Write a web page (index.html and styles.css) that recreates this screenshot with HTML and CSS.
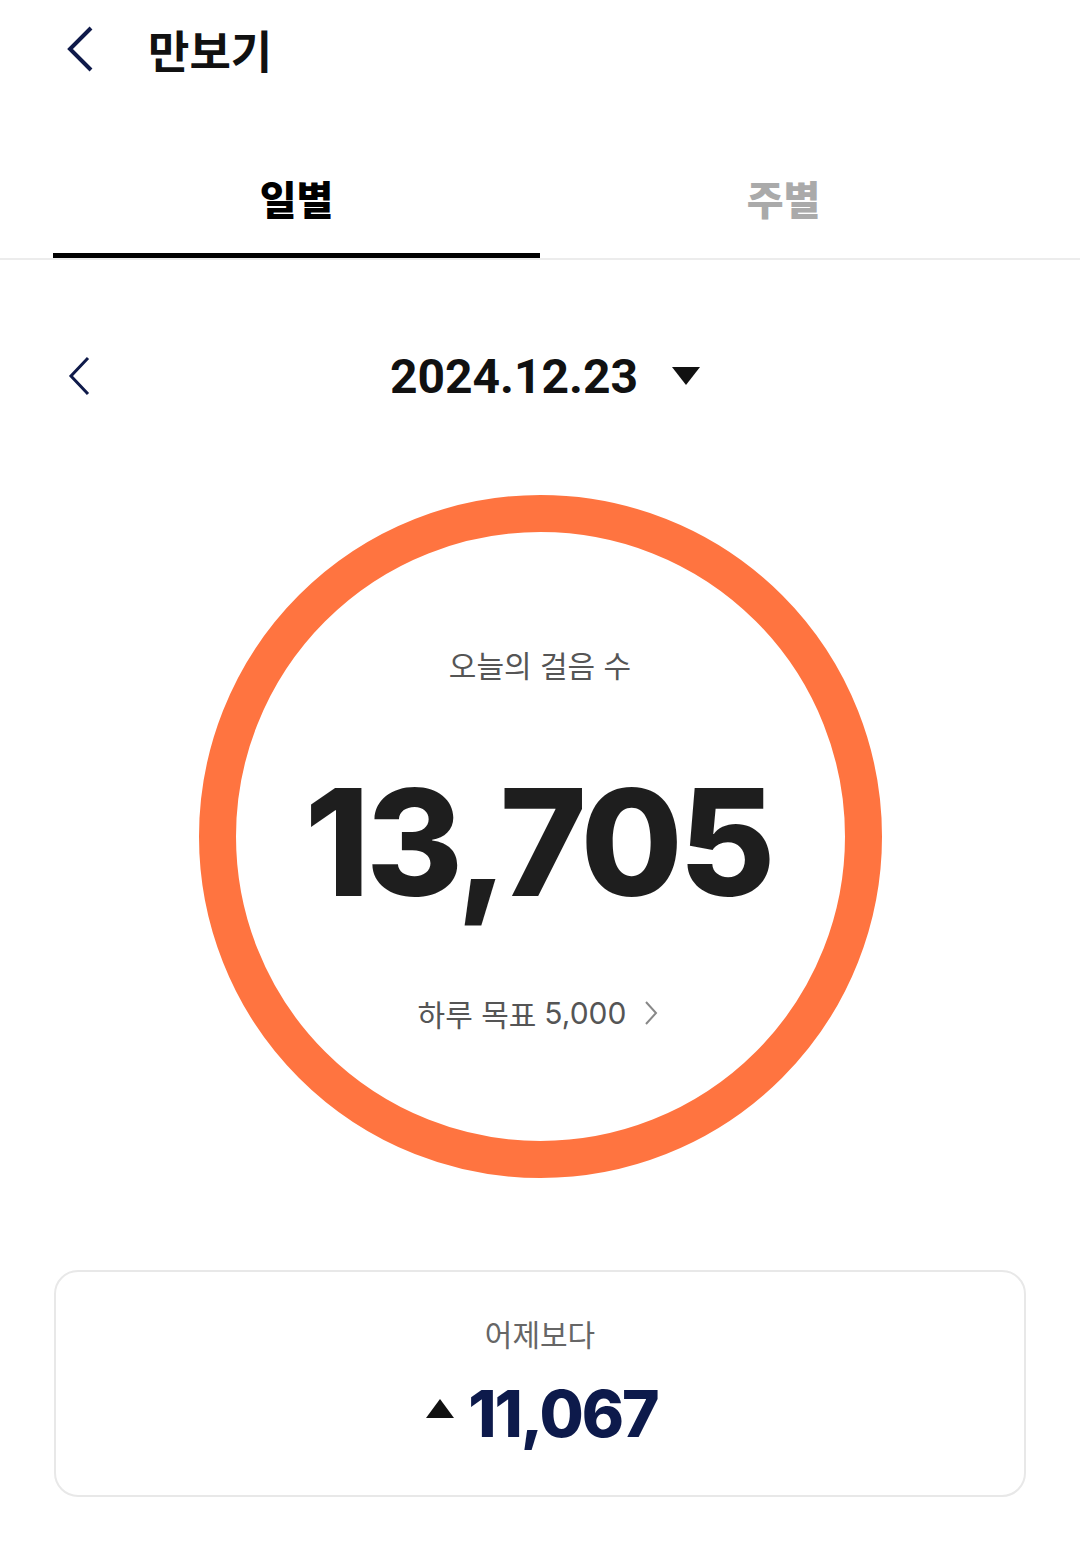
FILE: index.html
```
<!DOCTYPE html>
<html lang="ko">
<head>
<meta charset="utf-8">
<title>만보기</title>
<link rel="stylesheet" href="styles.css">
</head>
<body>
<div class="page">
  <header class="header">
    <svg class="back" viewBox="0 0 32 50" width="32" height="50"><path d="M27 4 L6 25 L27 46" fill="none" stroke="#0f1a4a" stroke-width="4" stroke-linecap="butt" stroke-linejoin="miter"/></svg>
    <h1 class="title">만보기</h1>
  </header>

  <nav class="tabs">
    <div class="tab active">일별</div>
    <div class="tab">주별</div>
  </nav>

  <section class="date-row">
    <svg class="date-prev" viewBox="0 0 26 40" width="26" height="40"><path d="M22 2 L5 20 L22 38" fill="none" stroke="#0f1a4a" stroke-width="3"/></svg>
    <div class="date-group">
      <span class="date">2024.12.23</span>
      <svg class="caret" viewBox="0 0 28 18" width="28" height="18"><path d="M0 0 H28 L14 18 Z" fill="#111"/></svg>
    </div>
  </section>

  <section class="ring-wrap">
    <div class="ring">
      <div class="ring-label">오늘의 걸음 수</div>
      <div class="ring-count">13,705</div>
      <div class="ring-goal">하루 목표 <span class="num">5,000</span>
        <svg class="goal-arrow" viewBox="0 0 14 26" width="14" height="26"><path d="M2 2 L12 13 L2 24" fill="none" stroke="#888" stroke-width="2"/></svg>
      </div>
    </div>
  </section>

  <section class="card">
    <div class="card-label">어제보다</div>
    <div class="card-value">
      <svg class="up" viewBox="0 0 28 19" width="28" height="19"><path d="M14 0 L28 19 H0 Z" fill="#111"/></svg>
      <span class="diff">11,067</span>
    </div>
  </section>
</div>
</body>
</html>
```
FILE: styles.css
```
* { box-sizing: border-box; }
html, body { margin: 0; padding: 0; background: #fff; }
body {
  font-family: "Noto Sans CJK KR", "Noto Sans", sans-serif;
  color: #111;
}
.page { width: 1080px; }

.header {
  height: 98px;
  display: flex;
  align-items: center;
  padding-left: 64px;
}
.back { display: block; }
.title {
  margin: 0 0 0 52px;
  font-size: 45px;
  font-weight: 700;
  color: #111;
  line-height: 1;
}

.tabs {
  margin-top: 42px;
  display: flex;
  padding: 0 53px;
  border-bottom: 2px solid #ececec;
}
.tab {
  flex: 1;
  height: 118px;
  display: flex;
  align-items: center;
  justify-content: center;
  font-size: 40px;
  font-weight: 900;
  color: #aaaaaa;
  border-bottom: 5px solid transparent;
  padding-top: 2px;
}
.tab.active {
  color: #000;
  border-bottom-color: #000;
}

.date-row {
  margin-top: 76px;
  height: 80px;
  display: flex;
  align-items: center;
  position: relative;
  padding-left: 66px;
}
.date-group {
  position: absolute;
  left: 0; right: 0; top: 0; bottom: 0;
  display: flex;
  align-items: center;
  justify-content: center;
  gap: 34px;
  padding-left: 10px;
}
.date {
  font-family: "Roboto", "Inter", sans-serif;
  font-weight: 700;
  font-size: 48px;
  letter-spacing: 0;
  color: #111;
}
.caret { display: block; }

.ring-wrap {
  margin-top: 79px;
  display: flex;
  justify-content: center;
}
.ring {
  width: 683px;
  height: 683px;
  border-radius: 50%;
  border: 37px solid #ff7440;
  display: flex;
  flex-direction: column;
  align-items: center;
  padding-top: 111px;
}
.ring-label {
  font-size: 30px;
  line-height: 42px;
  color: #555;
}
.ring-count {
  margin-top: 84px;
  font-family: "Inter", sans-serif;
  font-weight: 800;
  font-size: 148px;
  line-height: 148px;
  letter-spacing: -4px;
  color: #1e1e1e;
  padding-right: 4px;
}
.ring-goal {
  margin-top: 75px;
  font-size: 30px;
  line-height: 42px;
  color: #555;
  display: flex;
  align-items: center;
  gap: 8px;
  padding-right: 4px;
}
.ring-goal .num { font-family: "Inter", sans-serif; }
.goal-arrow { margin-left: 10px; }

.card {
  margin: 92px 0 0 54px;
  width: 972px;
  height: 227px;
  border: 2px solid #e8e8e8;
  border-radius: 24px;
  display: flex;
  flex-direction: column;
  align-items: center;
  padding-top: 40px;
}
.card-label {
  font-size: 30px;
  line-height: 42px;
  color: #666;
}
.card-value {
  margin-top: 28px;
  display: flex;
  align-items: center;
  gap: 14px;
  padding-left: 4px;
}
.up { display: block; margin-top: -12px; }
.diff {
  font-family: "Inter", sans-serif;
  font-weight: 800;
  font-size: 64px;
  line-height: 64px;
  letter-spacing: -2px;
  color: #0d1a4b;
}
```
